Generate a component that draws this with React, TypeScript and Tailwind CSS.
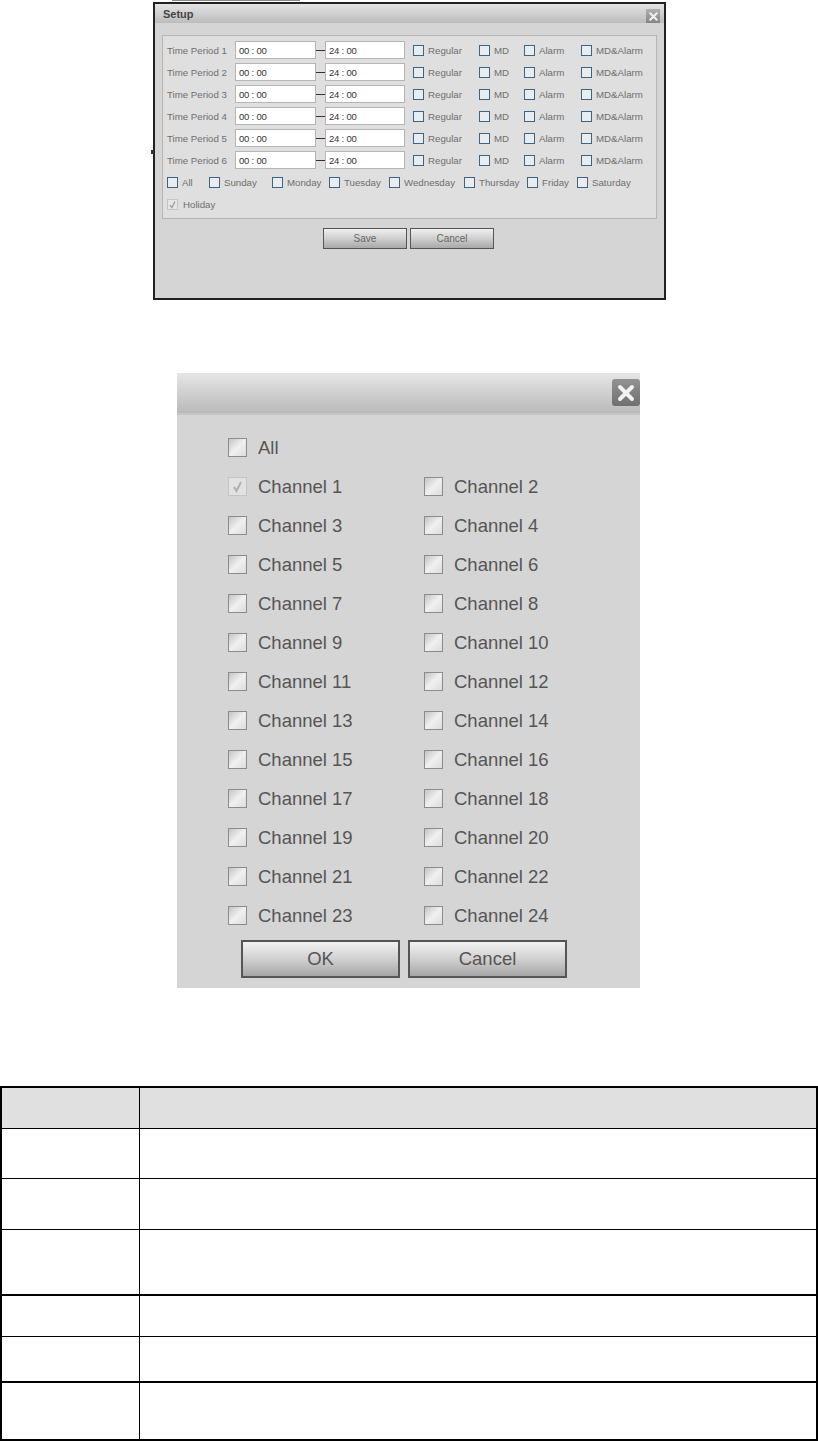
import React from 'react';

const PERIODS = [1, 2, 3, 4, 5, 6];

const MODES = [
  { label: 'Regular', cell: 'w-[66px]' },
  { label: 'MD', cell: 'w-[45px]' },
  { label: 'Alarm', cell: 'w-[57px]' },
  { label: 'MD&Alarm', cell: 'w-[70px]' },
];

const DAYS = [
  { label: 'All', cell: 'w-[42px]' },
  { label: 'Sunday', cell: 'w-[63px]' },
  { label: 'Monday', cell: 'w-[57px]' },
  { label: 'Tuesday', cell: 'w-[60px]' },
  { label: 'Wednesday', cell: 'w-[75px]' },
  { label: 'Thursday', cell: 'w-[63px]' },
  { label: 'Friday', cell: 'w-[50px]' },
  { label: 'Saturday', cell: 'w-[60px]' },
];

const CHANNEL_ROWS = [
  [1, 2], [3, 4], [5, 6], [7, 8], [9, 10], [11, 12],
  [13, 14], [15, 16], [17, 18], [19, 20], [21, 22], [23, 24],
];

// height includes the bottom rule of each table row
const TABLE_ROWS = [
  { cls: 'h-[41px] border-b border-black bg-[#e0e0e0]' },
  { cls: 'h-[50px] border-b border-black' },
  { cls: 'h-[51px] border-b border-black' },
  { cls: 'h-[66px] border-b-2 border-black' },
  { cls: 'h-[41px] border-b border-black' },
  { cls: 'h-[46px] border-b-2 border-black' },
  { cls: 'h-[56px]' },
];

const CloseIcon: React.FC<{ size: number; stroke: number }> = ({ size, stroke }) => (
  <svg width={size} height={size} viewBox="0 0 16 16">
    <path d="M4 4L12 12M12 4L4 12" stroke="#f2f2f2" strokeWidth={stroke} strokeLinecap="round" />
  </svg>
);

const SmallCheck: React.FC<{ label: string; cell: string }> = ({ label, cell }) => (
  <div className={`flex items-center shrink-0 ${cell}`}>
    <span className="w-[11px] h-[11px] mt-[1px] border border-[#3f6480] bg-[#e9edf0] shrink-0" />
    <span className="ml-[4px] pt-[2px] text-[9.7px] text-[#6e6e6e] whitespace-nowrap">{label}</span>
  </div>
);

const TimeInput: React.FC<{ value: string; width: string }> = ({ value, width }) => (
  <div className={`h-[18px] ${width} shrink-0 bg-white border border-[#b5b5b5] pl-[3px] pt-[1px] text-[9.5px] leading-[15px] tracking-[-0.2px] text-[#333]`}>
    {value}
  </div>
);

const SetupButton: React.FC<{ label: string }> = ({ label }) => (
  <button className="w-[84px] h-[21px] border border-[#555] bg-gradient-to-b from-[#f0f0f0] via-[#cfcfcf] to-[#a9a9a9] text-[10px] text-[#666]">
    {label}
  </button>
);

const BigCheck: React.FC<{ label: string; checked?: boolean }> = ({ label, checked }) => (
  <div className="flex items-center w-[196px] shrink-0">
    <span
      className={`w-[19px] h-[19px] border shrink-0 flex items-center justify-center ${
        checked
          ? 'border-[#c4c4c4] bg-[#e2e2e2]'
          : 'border-[#8c8c8c] bg-gradient-to-br from-[#c4c4c4] via-[#f0f0f0] to-[#dcdcdc]'
      }`}
    >
      {checked && (
        <svg width="13" height="13" viewBox="0 0 13 13">
          <path d="M3 7L5.5 11L10 2" stroke="#b0b0b0" strokeWidth="2" fill="none" />
        </svg>
      )}
    </span>
    <span className="ml-[11px] text-[18.5px] text-[#555] whitespace-nowrap">{label}</span>
  </div>
);

const BigButton: React.FC<{ label: string }> = ({ label }) => (
  <button className="w-[159px] h-[38px] border-2 border-[#555] bg-gradient-to-b from-[#f2f2f2] via-[#d0d0d0] to-[#a6a6a6] text-[18.5px] text-[#555]">
    {label}
  </button>
);

const SetupDialog = () => (
  <div className="relative ml-[153px] w-[513px] h-[298px] border-2 border-[#222] bg-[#d5d5d5]">
    <span className="absolute left-[-4px] top-[146px] w-[3px] h-[4px] bg-[#333]" />
    <div className="h-[19px] flex items-center justify-between pl-[8px] pr-[4px] bg-gradient-to-b from-[#e4e4e4] to-[#bcbcbc]">
      <span className="mt-[2px] text-[11px] font-bold text-[#444]">Setup</span>
      <span className="w-[14px] h-[14px] mt-[5px] bg-gradient-to-b from-[#b0b0b0] to-[#858585] flex items-center justify-center">
        <CloseIcon size={13} stroke={2.5} />
      </span>
    </div>
    <div className="ml-[7px] mt-[12px] w-[495px] h-[184px] border border-[#b5b5b5] bg-[#dfdfdf] pt-[3px] pl-[4px]">
      {PERIODS.map((n) => (
        <div key={n} className="h-[22px] flex items-center">
          <span className="w-[68px] shrink-0 pt-[2px] text-[9.7px] text-[#6e6e6e] whitespace-nowrap">Time Period {n}</span>
          <TimeInput value="00 : 00" width="w-[81px]" />
          <span className="w-[9px] h-[1px] bg-[#333] shrink-0" />
          <TimeInput value="24 : 00" width="w-[80px]" />
          <span className="w-[8px] shrink-0" />
          {MODES.map((m) => (
            <SmallCheck key={m.label} label={m.label} cell={m.cell} />
          ))}
        </div>
      ))}
      <div className="h-[22px] flex items-center">
        {DAYS.map((d) => (
          <SmallCheck key={d.label} label={d.label} cell={d.cell} />
        ))}
      </div>
      <div className="h-[22px] flex items-center">
        <span className="w-[11px] h-[11px] mt-[1px] border border-[#c4c4c4] bg-[#e6e6e6] shrink-0 flex items-center justify-center">
          <svg width="9" height="9" viewBox="0 0 9 9">
            <path d="M2 5L3.8 7.5L7 1.5" stroke="#999" strokeWidth="1.2" fill="none" />
          </svg>
        </span>
        <span className="ml-[5px] pt-[2px] text-[9.7px] text-[#6e6e6e]">Holiday</span>
      </div>
    </div>
    <div className="flex gap-[3px] pl-[168px] mt-[9px]">
      <SetupButton label="Save" />
      <SetupButton label="Cancel" />
    </div>
  </div>
);

const ChannelDialog = () => (
  <div className="ml-[177px] mt-[73px] w-[463px] h-[615px] bg-[#d5d5d5]">
    <div className="h-[42px] border-b-2 border-[#c6c6c6] bg-gradient-to-b from-[#e6e6e6] to-[#bababa] flex justify-end items-start pt-[6px]">
      <span className="w-[28px] h-[27px] rounded-[3px] bg-gradient-to-b from-[#929292] to-[#707070] flex items-center justify-center">
        <CloseIcon size={24} stroke={2.6} />
      </span>
    </div>
    <div className="pt-[13px] pl-[51px]">
      <div className="h-[39px] flex items-center">
        <BigCheck label="All" />
      </div>
      {CHANNEL_ROWS.map(([a, b]) => (
        <div key={a} className="h-[39px] flex items-center">
          <BigCheck label={`Channel ${a}`} checked={a === 1} />
          <BigCheck label={`Channel ${b}`} />
        </div>
      ))}
    </div>
    <div className="flex gap-[8px] pl-[64px] mt-[5px]">
      <BigButton label="OK" />
      <BigButton label="Cancel" />
    </div>
  </div>
);

const ParamTable = () => (
  <div className="mt-[98px] w-[818px] border-2 border-black">
    {TABLE_ROWS.map((row, i) => (
      <div key={i} className={`flex ${row.cls}`}>
        <div className="w-[138px] border-r border-black" />
        <div className="flex-1" />
      </div>
    ))}
  </div>
);

export default function App() {
  return (
    <div className="w-[818px] h-[1441px] bg-white overflow-hidden font-['Liberation_Sans',Arial,sans-serif]">
      <div className="ml-[172px] w-[128px] h-[2px] border-t border-[#888]" />
      <SetupDialog />
      <ChannelDialog />
      <ParamTable />
    </div>
  );
}
